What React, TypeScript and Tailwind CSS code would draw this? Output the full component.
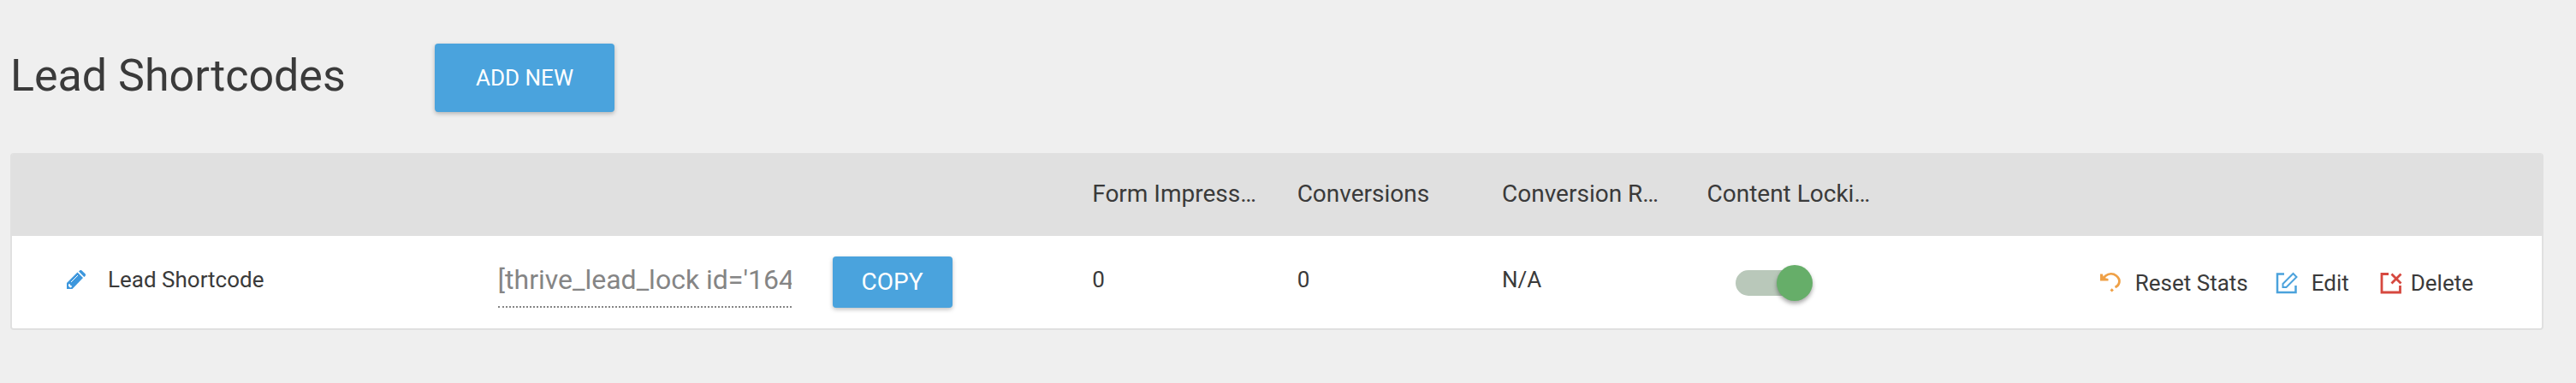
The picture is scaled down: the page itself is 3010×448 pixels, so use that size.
import React, { useState } from "react";

interface Shortcode {
  id: number;
  name: string;
  code: string;
  impressions: number;
  conversions: number;
  rate: string;
  locked: boolean;
}

const shortcodes: Shortcode[] = [
  {
    id: 164,
    name: "Lead Shortcode",
    code: "[thrive_lead_lock id='164']",
    impressions: 0,
    conversions: 0,
    rate: "N/A",
    locked: true,
  },
];

const statColumns = [
  "Form Impressions",
  "Conversions",
  "Conversion Rate",
  "Content Locking",
];

const PencilIcon = () => (
  <svg viewBox="0 0 22 22" className="size-[22px]" aria-hidden="true">
    <path d="M0 15L12.500 2.500l6.500 6.500L6.500 22H0z" fill="#3d97dd" />
    <path
      d="M14 1.500l0.800-0.800a2.200 2.200 0 0 1 3.100 0l3.400 3.400a2.200 2.200 0 0 1 0 3.100L20.300 8z"
      fill="#3d97dd"
    />
    <path d="M5 14L13 6" stroke="#fff" strokeWidth="1" />
    <path d="M2 16.500l1.500-0.500 0.800 1.700 1.700 0.800-0.500 1.500-1.500 0.500L2 18.500z" fill="#fff" />
  </svg>
);

const ResetIcon = () => (
  <svg viewBox="0 0 26 26" className="size-[26px]" fill="none" aria-hidden="true">
    <path
      d="M3.500 8.500L7.500 4.500C11 1.800 16 1.500 19.800 4.500C25.500 9 24 15.500 18.500 18"
      stroke="#efa046"
      strokeWidth="2.800"
    />
    <path d="M1 2.500h2.800L5 6.200 8 7.500l2.500 0.500V10.500H1z" fill="#efa046" />
    <path d="M14.700 19.200l2.200 2.200-2.200 2.200-2.200-2.200z" fill="#efa046" />
  </svg>
);

const EditIcon = () => (
  <svg viewBox="0 0 26 26" className="size-[26px]" fill="none" stroke="#4ba2dc" aria-hidden="true">
    <path d="M10 2.500H2v21.500h21.500v-8" strokeWidth="2.500" />
    <path d="M8.500 18v-4L20.500 2l4 4-12 12z" strokeWidth="2" />
  </svg>
);

const DeleteIcon = () => (
  <svg viewBox="0 0 26 26" className="size-[26px]" fill="none" stroke="#d6483f" aria-hidden="true">
    <path d="M10 2.500H2v21.500h21.500v-8" strokeWidth="2.800" />
    <path d="M13.500 2.500l11 11M24.500 2.500l-11 11" strokeWidth="2.800" />
  </svg>
);

const ShortcodeRow: React.FC<{ item: Shortcode }> = ({ item }) => {
  const [locked, setLocked] = useState(item.locked);

  return (
    <tr className="h-[108px] bg-white align-top text-[26px] leading-8">
      <td className="pt-[35px] pl-16">
        <div className="flex items-center">
          <button type="button" aria-label="Rename">
            <PencilIcon />
          </button>
          <span className="ml-[26px]">{item.name}</span>
        </div>
      </td>
      <td className="pt-6">
        <div className="flex items-start">
          <input
            type="text"
            readOnly
            value={item.code}
            aria-label="Shortcode"
            className="h-[60px] w-[343px] border-b-2 border-dotted border-[#858585] pb-1 text-[32px] text-[#858585] outline-none"
          />
          <button
            type="button"
            onClick={() => navigator.clipboard?.writeText(item.code)}
            className="ml-12 h-[60px] w-[140px] rounded-sm bg-[#4aa3dd] text-[28px] text-white shadow-[0_2px_5px_rgba(0,0,0,0.25)]"
          >
            COPY
          </button>
        </div>
      </td>
      <td className="pt-[35px]">{item.impressions}</td>
      <td className="pt-[35px]">{item.conversions}</td>
      <td className="pt-[35px]">{item.rate}</td>
      <td className="pt-[34px] pl-[34px]">
        <label className="relative flex h-[42px] w-[92px] items-center">
          <input
            type="checkbox"
            checked={locked}
            onChange={(e) => setLocked(e.target.checked)}
            aria-label="Content Locking"
            className="peer sr-only"
          />
          <span className="h-[30px] w-20 rounded-full bg-[#bdbdbd] peer-checked:bg-[#b9c8ba]" />
          <span className="absolute left-0 size-[42px] rounded-full bg-white shadow-[0_3px_5px_rgba(0,0,0,0.35)] peer-checked:left-12 peer-checked:bg-[#66ae69]" />
        </label>
      </td>
      <td className="pt-[39px] pr-20">
        <div className="flex justify-end">
          <a href="#reset" className="flex items-center gap-4">
            <ResetIcon />
            Reset Stats
          </a>
          <a href="#edit" className="ml-8 flex items-center gap-4">
            <EditIcon />
            Edit
          </a>
          <a href="#delete" className="ml-9 flex items-center gap-2.5">
            <DeleteIcon />
            Delete
          </a>
        </div>
      </td>
    </tr>
  );
};

export default function App() {
  return (
    <main className="min-h-screen bg-[#efefef] pr-[38px] pl-3 font-[Roboto,sans-serif] text-[#3a3a3a]">
      <header className="flex items-start pt-[51px]">
        <h1 className="w-[496px] text-[52px] leading-[76px]">Lead Shortcodes</h1>
        <button
          type="button"
          className="h-20 w-[210px] rounded-sm bg-[#4aa3dd] text-[26px] text-white shadow-[0_2px_5px_rgba(0,0,0,0.25)]"
        >
          ADD NEW
        </button>
      </header>

      <div className="mt-12 overflow-hidden rounded-sm border-2 border-t-0 border-[#e0e0e0]">
        <table className="w-full table-fixed border-collapse text-left">
          <colgroup>
            <col className="w-[19.2%]" />
            <col className="w-[23.5%]" />
            <col className="w-[8.1%]" />
            <col className="w-[8.1%]" />
            <col className="w-[8.1%]" />
            <col className="w-[8.1%]" />
            <col />
          </colgroup>
          <thead>
            <tr className="h-[97px] bg-[#e0e0e0] text-[28px]">
              <td />
              <td />
              {statColumns.map((title) => (
                <th key={title} scope="col" title={title} className="truncate pr-11 pb-0.5 font-normal">
                  {title}
                </th>
              ))}
              <td />
            </tr>
          </thead>
          <tbody>
            {shortcodes.map((item) => (
              <ShortcodeRow key={item.id} item={item} />
            ))}
          </tbody>
        </table>
      </div>
    </main>
  );
}
